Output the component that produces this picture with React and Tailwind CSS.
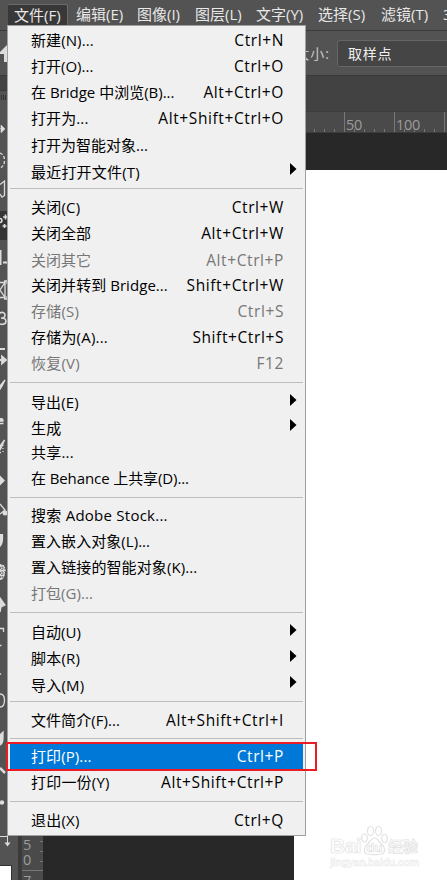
import React from 'react';
import clsx from 'clsx';

const FONT = 'font-["Open_Sans","Noto_Sans_CJK_SC",sans-serif]';

const MENU_BAR = [
  { label: '文件(F)', width: 'w-[60px]', active: true },
  { label: '编辑(E)', width: 'w-[61px]' },
  { label: '图像(I)', width: 'w-[58px]' },
  { label: '图层(L)', width: 'w-[61px]' },
  { label: '文字(Y)', width: 'w-[62px]' },
  { label: '选择(S)', width: 'w-[63px]' },
  { label: '滤镜(T)', width: 'w-[62px]' },
];

const GROUPS = [
  {
    className: 'pt-[2px] pb-[3px]',
    items: [
      { label: '新建(N)...', keys: 'Ctrl+N', tracking: 'tracking-[0.1px]' },
      { label: '打开(O)...', keys: 'Ctrl+O', tracking: 'tracking-normal' },
      { label: '在 Bridge 中浏览(B)...', keys: 'Alt+Ctrl+O', tracking: 'tracking-normal' },
      { label: '打开为...', keys: 'Alt+Shift+Ctrl+O', tracking: 'tracking-[0.1px]' },
      { label: '打开为智能对象...', height: 'h-[27px]', low: true, tracking: 'tracking-normal' },
      { label: '最近打开文件(T)', submenu: true, low: true },
    ],
  },
  {
    className: 'pt-[6px] pb-[5px]',
    items: [
      { label: '关闭(C)', keys: 'Ctrl+W' },
      { label: '关闭全部', keys: 'Alt+Ctrl+W', tracking: 'tracking-normal' },
      { label: '关闭其它', keys: 'Alt+Ctrl+P', disabled: true, low: true, tracking: 'tracking-normal' },
      { label: '关闭并转到 Bridge...', keys: 'Shift+Ctrl+W', tracking: 'tracking-[0.05px]' },
      { label: '存储(S)', keys: 'Ctrl+S', disabled: true },
      { label: '存储为(A)...', keys: 'Shift+Ctrl+S' },
      { label: '恢复(V)', keys: 'F12', disabled: true },
    ],
  },
  {
    className: 'pt-[7px] pb-[5px]',
    items: [
      { label: '导出(E)', submenu: true, tracking: 'tracking-[0.1px]' },
      { label: '生成', submenu: true, height: 'h-[25px]', low: true },
      { label: '共享...', height: 'h-[25px]' },
      { label: '在 Behance 上共享(D)...', tracking: 'tracking-[-0.1px]' },
    ],
  },
  {
    className: 'pt-[5px] pb-[5px]',
    items: [
      { label: '搜索 Adobe Stock...', tracking: 'tracking-[0.25px]' },
      { label: '置入嵌入对象(L)...', tracking: 'tracking-[0.05px]' },
      { label: '置入链接的智能对象(K)...', tracking: 'tracking-[0.1px]' },
      { label: '打包(G)...', disabled: true, tracking: 'tracking-[0.05px]' },
    ],
  },
  {
    className: 'pt-[7px] pb-[2px]',
    items: [
      { label: '自动(U)', submenu: true, tracking: 'tracking-[0.05px]' },
      { label: '脚本(R)', submenu: true },
      { label: '导入(M)', submenu: true, height: 'h-[27px]', low: true },
    ],
  },
  {
    className: 'pt-[6px] pb-[4px]',
    items: [{ label: '文件简介(F)...', keys: 'Alt+Shift+Ctrl+I', tracking: 'tracking-[0.05px]' }],
  },
  {
    className: 'pt-[5px] pb-[5px]',
    items: [
      { label: '打印(P)...', keys: 'Ctrl+P', selected: true, tracking: 'tracking-[0.1px]' },
      { label: '打印一份(Y)', keys: 'Alt+Shift+Ctrl+P' },
    ],
  },
  {
    className: 'pt-[6px] pb-[1px]',
    items: [{ label: '退出(X)', keys: 'Ctrl+Q' }],
  },
];

// Each tool shows only the part that sticks out to the left of the open menu.
const TOOLS = [
  { h: 30, art: <path d="M0 15.500h1M1 12l4 3.900-4 3.900z" fill="#ddd" stroke="#ddd" strokeWidth=".6" /> },
  { h: 30, art: <path d="M0 10c3 1 4.500 4 4.500 7.500s-1.500 6.500-4.500 7.500" strokeDasharray="3 1.800" /> },
  { h: 38, art: <path d="M0 11.500L4.500 8v14.500L2 24l-2-3" /> },
  { h: 29, selected: true, art: <path d="M5.500 3.500v5M3 6h5M0 7.500c2.500 0 2.500 4 0 4M4.500 13v4M2.500 15h4" strokeWidth="1.600" /> },
  { h: 34, art: <path d="M.5 10v15M3 22.500h4" strokeWidth="2" /> },
  { h: 32, art: <path d="M0 8.500h5v15H0M5 8.500L0 16l5 7.500M4 7h3v3M4 25h3v-3" /> },
  { h: 29, art: <path d="M-.5 7c2.500-1.200 5.500-.6 5.500 2.200C5 11 3.500 12 1 12c3 0 5 1 5 3.200 0 3-3.500 3.800-6.500 2.600" strokeWidth="1.600" /> },
  { h: 36, art: <path d="M0 14h5M0 25h2M2 21.500l4 3.500-4 3.500z" strokeWidth="1.800" fill="#ddd" /> },
  { h: 34, art: <path d="M0 15l5-6-3 6-2 3z" fill="#ddd" stroke="#ddd" /> },
  { h: 30, art: <path d="M0 14c2-1 3 0 3 2H0zM0 18.500h3.500" fill="#ddd" stroke="#ddd" /> },
  { h: 34, art: <><path d="M0 11l4.500-6-3 7-1.500 3z" fill="#ddd" /><path d="M3 10v9M0 17.500h2" strokeDasharray="1 2" /></> },
  { h: 30, art: <path d="M0 6.500l5 5-5 5z" fill="#ddd" stroke="none" /> },
  { h: 30, art: <><path d="M0 5l5 6-5 4" /><circle cx="5" cy="14" r="2.500" fill="#ddd" stroke="none" /></> },
  { h: 30, art: <path d="M0 5h3c.5 5 0 11-3 13z" fill="#ddd" stroke="none" /> },
  { h: 36, art: <><path d="M0 5c5 0 7 5 5 9 0 4-2 7-5 7z" fill="#ddd" stroke="none" /><path d="M0 9h6M0 14h6M0 18h5M2 5v15M5 7v12" stroke="#555" strokeDasharray="1 1.500" /></> },
  { h: 32, art: <path d="M0 3l5 7-4 2-1 5z" fill="#ddd" /> },
  { h: 32, art: <path d="M0 1.500h3.500V5M0 18.500h1.500" /> },
  { h: 32, art: <path d="M0 14.500l1 1" /> },
  { h: 34, art: <path d="M0 3c3 0 4.500 2 4.500 6s-1.500 7-4.500 7" /> },
  { h: 34, art: <path d="M0 10l3-3v6c0 4-1 6-3 7z" fill="#ddd" /> },
  { h: 33, art: <path d="M0 9l5 5" strokeWidth="2.500" /> },
  { h: 29, art: <circle cx="2" cy="10.500" r="2.200" fill="#ddd" stroke="none" /> },
];

const Tool = ({ tool }) => (
  <div className={clsx('flex w-full shrink-0', tool.selected && 'bg-[#353535]')}>
    <svg width="8" height={tool.h} viewBox={`0 0 8 ${tool.h}`} fill="none" stroke="#dcdcdc" strokeWidth="1.300">
      {tool.art}
    </svg>
  </div>
);

const MenuItem = ({ item }) => (
  <div
    className={clsx(
      'flex shrink-0 items-center justify-between pl-[21px] text-[15px] leading-none whitespace-nowrap',
      item.height || 'h-[26px]',
      !item.low && 'pb-[2px]',
      item.submenu ? 'pr-[6px]' : 'pr-[19px]',
      item.selected && 'bg-[#0078d7]',
      item.selected ? 'text-white' : item.disabled ? 'text-[#777]' : 'text-black'
    )}
  >
    <span className={item.tracking || 'tracking-[0.2px]'}>{item.label}</span>
    {item.keys && <span className="pt-[2px] text-[15.5px] tracking-[0.6px]">{item.keys}</span>}
    {item.submenu && (
      <svg width="7" height="12" viewBox="0 0 7 12" className={item.low ? '-mt-[7px]' : '-mt-[5px]'}>
        <path d="M0 0L6.500 6L0 12Z" fill="#000" />
      </svg>
    )}
  </div>
);

const FileMenu = () => (
  <div className="absolute left-[7px] top-[25px] flex h-[811px] w-[299px] flex-col border border-[#a0a0a0] bg-[#f0f0f0] px-[2px]">
    {GROUPS.map((group, i) => (
      <div key={i} className={clsx('flex flex-col', group.className, i < GROUPS.length - 1 && 'border-b border-[#bdbdbd]')}>
        {group.items.map((item) => (
          <MenuItem key={item.label} item={item} />
        ))}
      </div>
    ))}
  </div>
);

const Watermark = () => (
  <div className="absolute left-[330px] top-[825px] w-[92px] text-white [-webkit-text-stroke:0.7px_#e2e2e2]">
    <div className="flex h-[31px] items-end">
      <span className="w-[31px] font-['Liberation_Sans'] text-[21px] leading-[20px] font-bold tracking-[-0.5px]">Bai</span>
      <span className="relative flex h-[31px] w-[27px] shrink-0 items-end justify-center">
        <svg className="absolute inset-0" width="27" height="31" viewBox="0 0 27 31" fill="#fff" stroke="#e2e2e2" strokeWidth="1.200">
          <ellipse cx="3.500" cy="13" rx="2.800" ry="4" />
          <ellipse cx="9.500" cy="6" rx="3" ry="4.500" />
          <ellipse cx="17.500" cy="6" rx="3" ry="4.500" />
          <ellipse cx="23.500" cy="13.500" rx="2.800" ry="4" />
          <path d="M13.500 13c-4 0-4 4-7 6s-5 9 0 10c3 .5 11 .5 14 0 5-1 3-8 0-10s-3-6-7-6z" />
        </svg>
        <span className="relative font-['Liberation_Sans'] text-[13px] leading-[17px] font-bold">du</span>
      </span>
      <span className="text-[15px] leading-[20px] font-bold">经验</span>
    </div>
    <div className="font-['Liberation_Sans'] text-[10.5px] leading-[12px] font-bold tracking-[-0.2px] text-[#fafafa] [-webkit-text-stroke:0.4px_#e8e8e8]">
      jingyan.baidu.com
    </div>
  </div>
);

const MenuBar = () => (
  <div className="flex h-[30px] shrink-0 bg-[#535353] pl-[8px] pt-[4px] text-[15px] leading-[21px] text-[#e8e8e8]">
    {MENU_BAR.map((m) => (
      <div
        key={m.label}
        className={clsx(
          'h-[22px] shrink-0 pl-[6px] whitespace-nowrap',
          m.width,
          m.active && 'mr-[2px] rounded-[2px] border-t border-r border-[#6a6a6a] bg-[#383838] leading-[20px]'
        )}
      >
        {m.label}
      </div>
    ))}
    <div className="pl-[6px]">3D</div>
  </div>
);

const OptionsBar = () => (
  <div className="flex h-[46px] shrink-0 items-center border-y border-[#393939] bg-[#535353]">
    <svg width="8" height="20" viewBox="0 0 8 20" className="shrink-0">
      <path d="M0 9L8 1V19H4V11H0Z" fill="#ddd" />
    </svg>
    <div className="w-[322px] shrink-0 text-right text-[14px] tracking-[1px] text-[#c8c8c8]">取样大小:</div>
    <div className="ml-[7px] flex h-[27px] w-[120px] shrink-0 items-center rounded-l-[3px] border border-[#666] bg-[#454545] pl-[10px] text-[14px] tracking-[0.8px] text-[#eee]">
      取样点
    </div>
  </div>
);

const Toolbar = () => (
  <div className="flex w-[18px] shrink-0 flex-col bg-[#535353]">
    <div className="h-[15px] shrink-0 border-b border-[#3a3a3a] bg-[#424242]" />
    <div className="flex h-[22px] shrink-0 gap-[1px] pl-[1px] pt-[4px]">
      <i className="h-[5px] w-px bg-[#333]" />
      <i className="h-[5px] w-px bg-[#333]" />
      <i className="h-[5px] w-px bg-[#333]" />
      <i className="h-[5px] w-px bg-[#333]" />
    </div>
    <div className="flex h-[718px] shrink-0 flex-col overflow-hidden">
      {TOOLS.map((tool, i) => (
        <Tool key={i} tool={tool} />
      ))}
    </div>
    <svg width="14" height="34" viewBox="0 0 14 34" className="shrink-0" fill="none" stroke="#dcdcdc">
      <path d="M0 5.500h7.500M7.500 3v9" />
      <path d="M4.500 11.500h6L7.500 15.500z" fill="#ddd" stroke="none" />
    </svg>
    <div className="h-[20px] w-[12px] border-t border-r border-[#333] bg-white" />
  </div>
);

const TopRuler = () => (
  <div className="flex h-[22px] shrink-0 border-y border-[#3c3c3c] bg-[#4a4a4a] pl-[273px] text-[14.5px] leading-[25px] text-[#9c9c9c]">
    {['', '50', '100', ''].map((n, i) => (
      <div key={i} className="flex h-[20px] w-[50px] shrink-0 flex-col border-l border-[#777]">
        <div className="h-[17px] pl-[1px] tracking-[-0.3px]">{n}</div>
        <div className="flex gap-[9px] pl-[9px]">
          <i className="h-[3px] w-px bg-[#777]" />
          <i className="h-[3px] w-px bg-[#777]" />
          <i className="h-[3px] w-px bg-[#777]" />
          <i className="h-[3px] w-px bg-[#777]" />
        </div>
      </div>
    ))}
  </div>
);

const SideRuler = () => (
  <div className="flex w-[22px] shrink-0 flex-col border-l border-[#3c3c3c] bg-[#4a4a4a] pt-[704px] text-[14.5px] leading-[15px] text-[#9c9c9c]">
    <div className="flex h-[33px] shrink-0 justify-between pl-[1px]">
      <div>
        <div>5</div>
        <div>0</div>
      </div>
      <div className="flex flex-col gap-[9px] pt-[4px]">
        <i className="h-px w-[3px] bg-[#777]" />
        <i className="h-px w-[3px] bg-[#777]" />
        <i className="h-px w-[3px] bg-[#777]" />
      </div>
    </div>
    <div className="h-[12px] border-t border-[#777] pt-[2px] pl-[1px]">7</div>
  </div>
);

const Workspace = () => (
  <div className="flex min-w-0 flex-1 flex-col">
    <div className="h-[35px] shrink-0 bg-[#424242]" />
    <TopRuler />
    <div className="flex min-h-0 flex-1">
      <SideRuler />
      <div className="flex flex-1 bg-[#282828] pt-[37px] pl-[251px]">
        <div className="flex-1 bg-white" />
      </div>
    </div>
  </div>
);

export default function App() {
  return (
    <div className={clsx('relative flex h-[880px] w-[447px] flex-col overflow-hidden bg-[#282828]', FONT)}>
      <MenuBar />
      <OptionsBar />
      <div className="flex min-h-0 flex-1">
        <Toolbar />
        <div className="w-[3px] shrink-0 bg-[#3a3a3a]" />
        <Workspace />
      </div>
      <FileMenu />
      <div className="absolute left-[6px] top-[742px] h-[29px] w-[311px] border-2 border-[#ed1c24]" />
      <Watermark />
    </div>
  );
}
